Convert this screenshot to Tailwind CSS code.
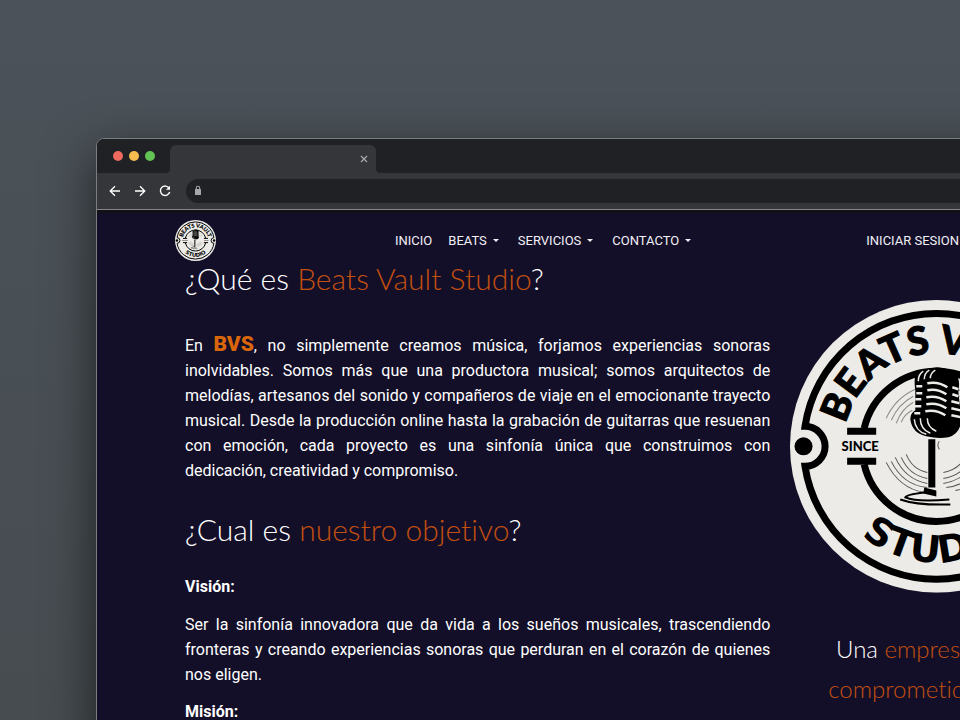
<!DOCTYPE html>
<html lang="es">
<head>
<meta charset="utf-8">
<title>Beats Vault Studio</title>
<script src="https://cdn.jsdelivr.net/npm/@tailwindcss/browser@4"></script>
</head>
<body class="min-h-screen overflow-hidden bg-linear-to-b from-[#4b5259] to-[#464c50] font-['Roboto','Liberation_Sans',sans-serif] text-white">
<svg class="hidden" aria-hidden="true">
  <symbol id="badge" viewBox="0 0 292 292">
    <defs>
      <path id="arcTop" d="M53 146a93 93 0 0 1 186 0"/>
      <path id="arcBottom" d="M30 146a116 116 0 0 0 232 0"/>
    </defs>
    <circle cx="146" cy="146" r="146" fill="#ecebe7"/>
    <g fill="none" stroke="#000" stroke-width="7">
      <path d="M15 126A132.500 132.500 0 0 1 277 126A20 20 0 0 0 277 166A132.500 132.500 0 0 1 15 166A20 20 0 0 0 15 126Z"/>
      <path d="M74 128A74 74 0 0 1 218 128M74 164A74 74 0 0 0 218 164"/>
      <path d="M57 131H86M206 131H235M57 161H86M206 161H235"/>
    </g>
    <circle cx="13.500" cy="146" r="9"/><circle cx="278.500" cy="146" r="9"/>
    <g font-family="Lato, sans-serif" font-weight="900" text-anchor="middle">
      <text font-size="39" stroke="#000" stroke-width="1"><textPath href="#arcTop" startOffset="50%">BEATS VAULT</textPath></text>
      <text font-size="38" font-family="'DejaVu Sans', sans-serif" font-weight="700"><textPath href="#arcBottom" startOffset="50%">STUDIO</textPath></text>
      <text x="70" y="151" font-size="13">SINCE</text>
      <text x="222" y="151" font-size="13">2020</text>
    </g>
    <g fill="none" stroke="#8a8a88" stroke-width="1">
      <path d="M125 89Q105 98 96 118M123 96Q108 104 101 120M123 102Q111 109 106 123M122 110Q114 114 111 122"/>
      <path d="M167 89Q187 98 196 118M169 96Q184 104 191 120M169 102Q181 109 186 123M170 110Q178 114 181 122"/>
    </g>
    <g fill="none" stroke="#555" stroke-width="1">
      <path d="M116 154Q122 169 137 172M111 157Q119 175 137 178M105 157Q115 179 137 183M101 161Q113 185 137 187M96 162Q109 188 134 192"/>
      <path d="M176 154Q170 169 153 172M181 157Q173 175 153 178M187 157Q177 179 153 183M191 161Q179 185 156 187M196 162Q183 188 165 190"/>
      <path d="M149 141Q146 145 149 149"/>
    </g>
    <path d="M125 90Q123 76 127 73Q134 68 147 67Q160 68 166 74Q170 80 168 92L170 110Q174 132 158 137Q148 139 136 136Q122 133 120 119Q120 113 125 110Z"/>
    <g fill="none" stroke="#ecebe7" stroke-width="2.500">
      <path d="M126 86H132M126 93H132M125 99H131M124 106H131M124 113H130"/>
      <path d="M137 83Q148 81 157 87M137 90Q147 88 156 94M136 97Q147 95 156 101M136 104Q147 102 156 108M135 111Q146 109 155 115"/>
      <path d="M162 87L168 89M162 94L168 96M161 101L169 103M161 108L170 110M161 115L171 117"/>
    </g>
    <g fill="none" stroke="#ecebe7" stroke-width="1.500">
      <path d="M128 81Q128 74 133 71M134 79Q134 73 139 70M140 78Q140 73 145 70M124 119Q125 131 136 134M130 118Q130 129 140 133M137 118Q137 127 146 131"/>
    </g>
    <path d="M138 139H145V187H138ZM134 187L146 190V196L133 193Z"/>
    <path d="M134 192Q116 194 115 197Q127 202 159 199M110 199Q127 205 160 204" fill="none" stroke="#000" stroke-width="2"/>
  </symbol>
</svg>

<div class="pt-[138px] pl-24">
  <div class="w-[calc(125%-4px)] overflow-hidden rounded-tl-lg rounded-tr-lg border border-[#7b7d7f] bg-[#140f29] shadow-[0_16px_50px_rgba(0,0,0,0.6)]">
    <div class="bg-[#202124]">
      <div class="flex h-[34px] items-end pl-4">
        <div class="flex gap-[6px] self-center">
          <span class="size-[10px] rounded-full bg-[#ed6a5e]"></span>
          <span class="size-[10px] rounded-full bg-[#f5bd4f]"></span>
          <span class="size-[10px] rounded-full bg-[#61c454]"></span>
        </div>
        <div class="relative ml-[15px] flex h-7 w-[206px] items-center justify-end rounded-t-md bg-[#35363a] pr-2">
          <span class="absolute bottom-0 -left-1 size-1 bg-[radial-gradient(circle_at_0_0,transparent_4px,#35363a_4px)]"></span>
          <span class="absolute -right-1 bottom-0 size-1 bg-[radial-gradient(circle_at_100%_0,transparent_4px,#35363a_4px)]"></span>
          <button aria-label="Cerrar pestaña" class="block"><svg class="size-2" viewBox="0 0 8 8" fill="none" stroke="#a9abae" stroke-width="1.200"><path d="M1 1l6 6M7 1L1 7"/></svg></button>
        </div>
      </div>
      <div class="flex h-[37px] items-center border-b border-[#85868a] bg-[#35363a] pl-3">
        <div class="flex gap-[13px] text-white">
          <button aria-label="Atrás"><svg class="size-3" viewBox="0 0 12 12" fill="none" stroke="currentColor" stroke-width="1.300"><path d="M11 6H1.500M6 1.200L1.200 6L6 10.800"/></svg></button>
          <button aria-label="Adelante"><svg class="size-3" viewBox="0 0 12 12" fill="none" stroke="currentColor" stroke-width="1.300"><path d="M1 6h9.500M6 1.200L10.800 6L6 10.800"/></svg></button>
          <button aria-label="Recargar"><svg class="size-3" viewBox="0 0 12 12" fill="none" stroke="currentColor" stroke-width="1.400"><path d="M10.300 3.500A4.700 4.700 0 1 0 10.700 7"/><path d="M11 .8V4.800H7Z" fill="currentColor" stroke="none"/></svg></button>
        </div>
        <div class="ml-[15px] flex h-6 flex-1 items-center rounded-full bg-[#202124] pl-2">
          <svg class="h-3 w-2" viewBox="0 0 8 12"><path d="M2.300 5V3a1.700 1.700 0 0 1 3.400 0V5" fill="none" stroke="#a4a7ab" stroke-width="1.100"/><rect x="1" y="4" width="6" height="6" rx=".6" fill="#a4a7ab"/></svg>
          <input aria-label="Dirección" class="h-full min-w-0 flex-1 bg-transparent px-2 text-xs outline-none">
        </div>
      </div>
    </div>

    <header class="flex h-[58px] items-center border-t-[3px] border-[#121118] bg-[#140f29] pr-[88px] pl-[78px] text-[13px] text-[#f1f0f5]">
      <a href="#" aria-label="Beats Vault Studio"><svg class="size-[41px]"><use href="#badge"/></svg></a>
      <nav class="ml-[179px] flex gap-4">
        <a href="#">INICIO</a>
        <a href="#" class="flex items-center gap-[6px]">BEATS <span class="border-x-[3px] border-t-[3px] border-x-transparent border-t-current"></span></a>
        <a href="#" class="ml-[3px] flex items-center gap-[6px]">SERVICIOS <span class="border-x-[3px] border-t-[3px] border-x-transparent border-t-current"></span></a>
        <a href="#" class="ml-[3px] flex items-center gap-[6px]">CONTACTO <span class="border-x-[3px] border-t-[3px] border-x-transparent border-t-current"></span></a>
      </nav>
      <a href="#" class="ml-[175px] whitespace-nowrap">INICIAR SESION</a>
    </header>

    <main class="grid grid-cols-[2fr_1fr] gap-5 overflow-hidden px-[88px]">
      <section>
        <h1 class="-mt-2 font-['Lato',sans-serif] text-[30px] leading-9 font-light">¿Qué es <span class="text-[#c4500f]">Beats Vault Studio</span>?</h1>
        <p class="mt-[37px] text-justify text-base leading-[25px]">En <b class="text-[21px] leading-none font-black text-[#d9660a]">BVS</b>, no simplemente creamos música, forjamos experiencias sonoras inolvidables. Somos más que una productora musical; somos arquitectos de melodías, artesanos del sonido y compañeros de viaje en el emocionante trayecto musical. Desde la producción online hasta la grabación de guitarras que resuenan con emoción, cada proyecto es una sinfonía única que construimos con dedicación, creatividad y compromiso.</p>
        <h2 class="mt-[26px] font-['Lato',sans-serif] text-[30px] leading-10 font-light [font-variant-ligatures:none]">¿Cual es <span class="text-[#c4500f]">nuestro objetivo</span>?</h2>
        <h3 class="mt-[25px] text-base leading-[25px] font-bold">Visión:</h3>
        <p class="mt-[13px] text-justify text-base leading-[25px]">Ser la sinfonía innovadora que da vida a los sueños musicales, trascendiendo fronteras y creando experiencias sonoras que perduran en el corazón de quienes nos eligen.</p>
        <h3 class="mt-3 text-base leading-[25px] font-bold">Misión:</h3>
      </section>
      <aside class="pt-8">
        <svg class="aspect-square w-full" role="img" aria-label="Beats Vault Studio"><use href="#badge"/></svg>
        <h2 class="mt-9 text-center font-['Lato',sans-serif] text-2xl leading-10 font-light [font-variant-ligatures:none]">Una <span class="text-[#c4500f]">empresa sólida</span><br><span class="text-[#c4500f]">comprometida</span> con el<br>desarrollo de tu música</h2>
      </aside>
    </main>
  </div>
</div>
</body>
</html>
